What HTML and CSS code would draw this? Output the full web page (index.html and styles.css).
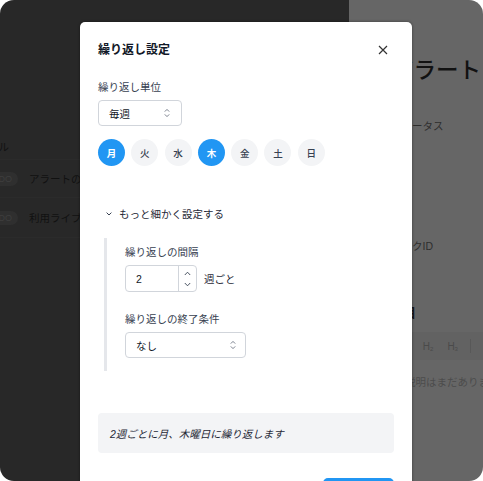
FILE: index.html
```html
<!DOCTYPE html>
<html lang="ja">
<head>
<meta charset="utf-8">
<link rel="stylesheet" href="styles.css">
</head>
<body>
<div class="frame">
  <div class="left-panel">
    <div class="list">
      <div class="list-head">タイトル</div>
      <div class="list-row"><span class="badge">TODO</span><span class="row-text">アラートの設定</span></div>
      <div class="list-row"><span class="badge">TODO</span><span class="row-text">利用ライブラリ</span></div>
    </div>
  </div>
  <div class="right-panel">
    <div class="page-title">アラート</div>
    <div class="meta">ステータス</div>
    <div class="meta meta-id">タスクID</div>
    <div class="section-title">項目</div>
    <div class="toolbar"><span>H1</span><span>H<sub>2</sub></span><span>H<sub>3</sub></span><span class="sep"></span><span>B</span><span>I</span></div>
    <div class="empty">説明はまだありません</div>
  </div>

  <div class="modal">
    <div class="modal-header">
      <h2 class="modal-title">繰り返し設定</h2>
      <button class="close" type="button">
        <svg width="10" height="10" viewBox="0 0 10 10"><path d="M1 1L9 9M9 1L1 9" stroke="#333" stroke-width="1.2" fill="none"/></svg>
      </button>
    </div>

    <div class="field">
      <div class="label">繰り返し単位</div>
      <div class="select select-unit">
        <span>毎週</span>
        <svg class="updown" width="6" height="10" viewBox="0 0 6 10"><path d="M0.8 3.6L3 1.4L5.2 3.6M0.8 6.4L3 8.6L5.2 6.4" stroke="#6b7280" stroke-width="0.9" fill="none"/></svg>
      </div>
    </div>

    <div class="days">
      <span class="day on">月</span>
      <span class="day">火</span>
      <span class="day">水</span>
      <span class="day on">木</span>
      <span class="day">金</span>
      <span class="day">土</span>
      <span class="day">日</span>
    </div>

    <div class="toggle">
      <svg width="6" height="4" viewBox="0 0 6 4"><path d="M0.6 0.6L3 3L5.4 0.6" stroke="#374151" stroke-width="1" fill="none"/></svg>
      <span>もっと細かく設定する</span>
    </div>

    <div class="advanced">
      <div class="field first">
        <div class="label">繰り返しの間隔</div>
        <div class="interval-row">
          <div class="number">
            <span class="num-value">2</span>
            <span class="spinner">
              <svg width="7" height="5" viewBox="0 0 7 5"><path d="M0.8 4L3.5 1.2L6.2 4" stroke="#374151" stroke-width="0.9" fill="none"/></svg>
              <svg width="7" height="5" viewBox="0 0 7 5"><path d="M0.8 1L3.5 3.8L6.2 1" stroke="#374151" stroke-width="0.9" fill="none"/></svg>
            </span>
          </div>
          <span class="unit">週ごと</span>
        </div>
      </div>
      <div class="field">
        <div class="label">繰り返しの終了条件</div>
        <div class="select select-end">
          <span>なし</span>
          <svg class="updown" width="6" height="10" viewBox="0 0 6 10"><path d="M0.8 3.6L3 1.4L5.2 3.6M0.8 6.4L3 8.6L5.2 6.4" stroke="#6b7280" stroke-width="0.9" fill="none"/></svg>
        </div>
      </div>
    </div>

    <div class="summary">2週ごとに月、木曜日に繰り返します</div>

    <div class="footer">
      <button class="primary" type="button">保存</button>
    </div>
  </div>
</div>
</body>
</html>
```

FILE: styles.css
```css
* { box-sizing: border-box; }
html, body { margin: 0; padding: 0; background: #ffffff; }
body {
  font-family: "Liberation Sans", "Noto Sans CJK JP", sans-serif;
  font-size: 10.5px;
  color: #1f2937;
}
.frame {
  position: relative;
  width: 483px;
  height: 481px;
  border-radius: 14px;
  overflow: hidden;
  display: flex;
}
.left-panel {
  width: 349px;
  flex: none;
  background: #282828;
  color: #121212;
}
.list {
  margin-left: -28px;
  padding-top: 138px;
}
.list-head {
  line-height: 18px;
  margin-left: -5px;
  height: 22px;
  border-bottom: 1px solid #2b2b2b;
}
.list-row {
  display: flex;
  align-items: center;
  height: 38px;
  gap: 11px;
  border-bottom: 1px solid #2b2b2b;
}
.list-row + .list-row { height: 40px; }
.badge {
  background: #2f2f2f;
  color: #3e3e3e;
  border-radius: 7px;
  font-size: 9px;
  padding: 1px 6px;
  line-height: 12px;
  width: 46px;
  text-align: right;
}
.row-text { font-size: 10.5px; color: #111111; }

.right-panel {
  flex: 1;
  background: #666666;
  padding-left: 42px;
  color: #161616;
  white-space: nowrap;
}
.page-title {
  font-size: 22.5px;
  line-height: 28px;
  margin-top: 57px;
  color: #121212;
  font-weight: 500;
}
.meta {
  margin-top: 33px;
  line-height: 16px;
  color: #2e2e2e;
}
.meta-id { margin-top: 104px; }
.section-title {
  font-size: 13px;
  font-weight: bold;
  margin-top: 49px;
  line-height: 20px;
  margin-left: -1px;
}
.toolbar {
  margin-top: 9px;
  margin-left: -42px;
  padding-left: 47px;
  height: 28px;
  background: #626262;
  display: flex;
  align-items: center;
  gap: 14px;
  color: #4a4a4a;
  font-size: 10px;
}
.toolbar sub { font-size: 6px; vertical-align: -1px; }
.toolbar .sep { width: 1px; height: 14px; background: #585858; margin: 0 -2px; }
.empty {
  margin-top: 14px;
  color: #4c4c4c;
  font-size: 10.5px;
  margin-left: 14px;
}

.modal {
  position: absolute;
  left: 80px;
  top: 22px;
  width: 332px;
  height: 480px;
  background: #ffffff;
  border-radius: 5px;
  box-shadow: 0 0 3px rgba(0, 0, 0, 0.45);
  padding: 18px 18px 0 18px;
}
.modal-header {
  display: flex;
  align-items: center;
  justify-content: space-between;
  height: 20px;
}
.modal-title {
  margin: 0;
  font-size: 12px;
  font-weight: bold;
  line-height: 20px;
  color: #111827;
}
.close {
  width: 22px;
  height: 20px;
  padding: 0;
  border: 0;
  background: transparent;
  display: flex;
  align-items: center;
  justify-content: center;
}
.field { margin-top: 18px; }
.label {
  line-height: 18px;
  color: #374151;
  margin-bottom: 4px;
}
.select {
  height: 26px;
  border: 1px solid #d1d5db;
  border-radius: 4px;
  display: flex;
  align-items: center;
  justify-content: space-between;
  padding: 0 10px 0 10px;
  color: #111827;
}
.select-unit { width: 84px; padding-right: 11px; }
.select-end { width: 121px; padding-right: 9px; }
.days {
  display: flex;
  gap: 6.3px;
  margin-top: 13px;
}
.day {
  width: 27px;
  height: 27px;
  border-radius: 50%;
  background: #f3f4f6;
  color: #374151;
  font-size: 9.5px;
  font-weight: 500;
  display: flex;
  align-items: center;
  justify-content: center;
}
.day.on {
  background: #2196f3;
  color: #ffffff;
  font-weight: bold;
}
.toggle {
  margin-top: 39px;
  line-height: 18px;
  display: flex;
  align-items: center;
  gap: 7px;
  padding-left: 8px;
  color: #1f2937;
}
.advanced {
  margin-top: 15px;
  margin-left: 6px;
  border-left: 3px solid #e5e7eb;
  padding: 5px 0 13px 18px;
}
.advanced .field.first { margin-top: 0; }
.interval-row {
  display: flex;
  align-items: center;
  gap: 7px;
}
.number {
  width: 72px;
  height: 27px;
  border: 1px solid #d1d5db;
  border-radius: 4px;
  display: flex;
}
.num-value {
  flex: 1;
  padding-left: 10px;
  display: flex;
  align-items: center;
  color: #111827;
}
.spinner {
  width: 18px;
  border-left: 1px solid #d1d5db;
  display: flex;
  flex-direction: column;
  align-items: center;
  justify-content: space-between;
  padding: 5px 0 4px 0;
}
.unit { color: #1f2937; }
.summary {
  margin-top: 42px;
  height: 40px;
  background: #f3f4f6;
  border-radius: 4px;
  padding: 0 12px;
  display: flex;
  align-items: center;
  font-style: italic;
  color: #1f2937;
}
.footer {
  margin-top: 25px;
  display: flex;
  justify-content: flex-end;
}
.primary {
  width: 71px;
  height: 30px;
  border: 0;
  border-radius: 5px;
  background: #2196f3;
  color: #ffffff;
  font-family: inherit;
  font-size: 10.5px;
}
```
